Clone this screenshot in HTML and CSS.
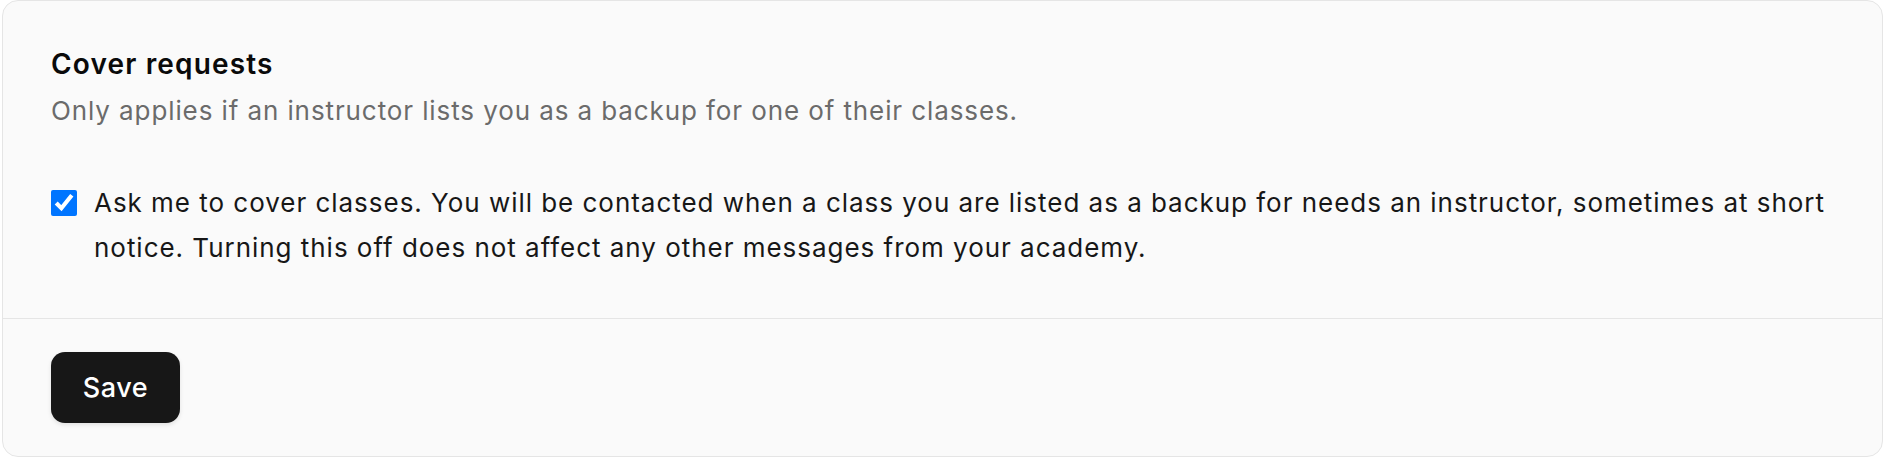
FILE: index.html
```html
<!DOCTYPE html>
<html lang="en">
<head>
    <meta charset="UTF-8">
    <meta name="viewport" content="width=device-width, initial-scale=1.0">
    <title>Cover requests</title>
    <link rel="stylesheet" href="styles.css">
</head>
<body>
    <div class="page">
        <form class="card">
            <div class="card-body">
                <h2>Cover requests</h2>
                <p class="hint">Only applies if an instructor lists you as a backup for one of their classes.</p>
                <label class="option">
                    <input type="checkbox" class="check" checked>
                    <span>Ask me to cover classes. You will be contacted when a class you are listed as a backup for needs an instructor, sometimes at short notice. Turning this off does not affect any other messages from your academy.</span>
                </label>
            </div>
            <div class="card-footer">
                <button type="button" class="save-btn">Save</button>
            </div>
        </form>
    </div>
</body>
</html>
```

FILE: styles.css
```css
body {
    font-family: Inter, 'Noto Sans', sans-serif;
    background-color: #fff;
    margin: 0;
    padding: 0;
}
.page {
    padding: 0 1px 0 2px;
}
.card {
    background-color: #fafafa;
    border: 1px solid #e5e5e5;
    border-radius: 16px;
    height: 457px;
    box-sizing: border-box;
    display: flex;
    flex-direction: column;
}
.card-body {
    padding: 47px 48px 48px;
    border-bottom: 1px solid #e5e5e5;
}
h2 {
    margin: 0 0 8px;
    font-size: 28px;
    line-height: 32px;
    font-weight: 600;
    letter-spacing: 1.15px;
    color: #0a0a0a;
}
.hint {
    margin: 0;
    font-size: 26px;
    line-height: 46px;
    letter-spacing: 0.9px;
    color: #6b6b6b;
}
.option {
    display: flex;
    gap: 17px;
    margin-top: 46px;
    font-size: 26px;
    line-height: 45px;
    letter-spacing: 0.97px;
    color: #171717;
}
.check {
    flex: none;
    width: 26px;
    height: 26px;
    margin: 10px 0 0;
    accent-color: #0075ff;
}
.card-footer {
    padding: 33px 48px 32px;
}
.save-btn {
    font-family: inherit;
    background-color: #171717;
    color: #fff;
    border: none;
    height: 71px;
    width: 129px;
    padding: 0;
    font-size: 27px;
    font-weight: 500;
    letter-spacing: 0.6px;
    border-radius: 14px;
    cursor: pointer;
    box-shadow: 0 2px 4px rgba(0, 0, 0, 0.1);
}
```
